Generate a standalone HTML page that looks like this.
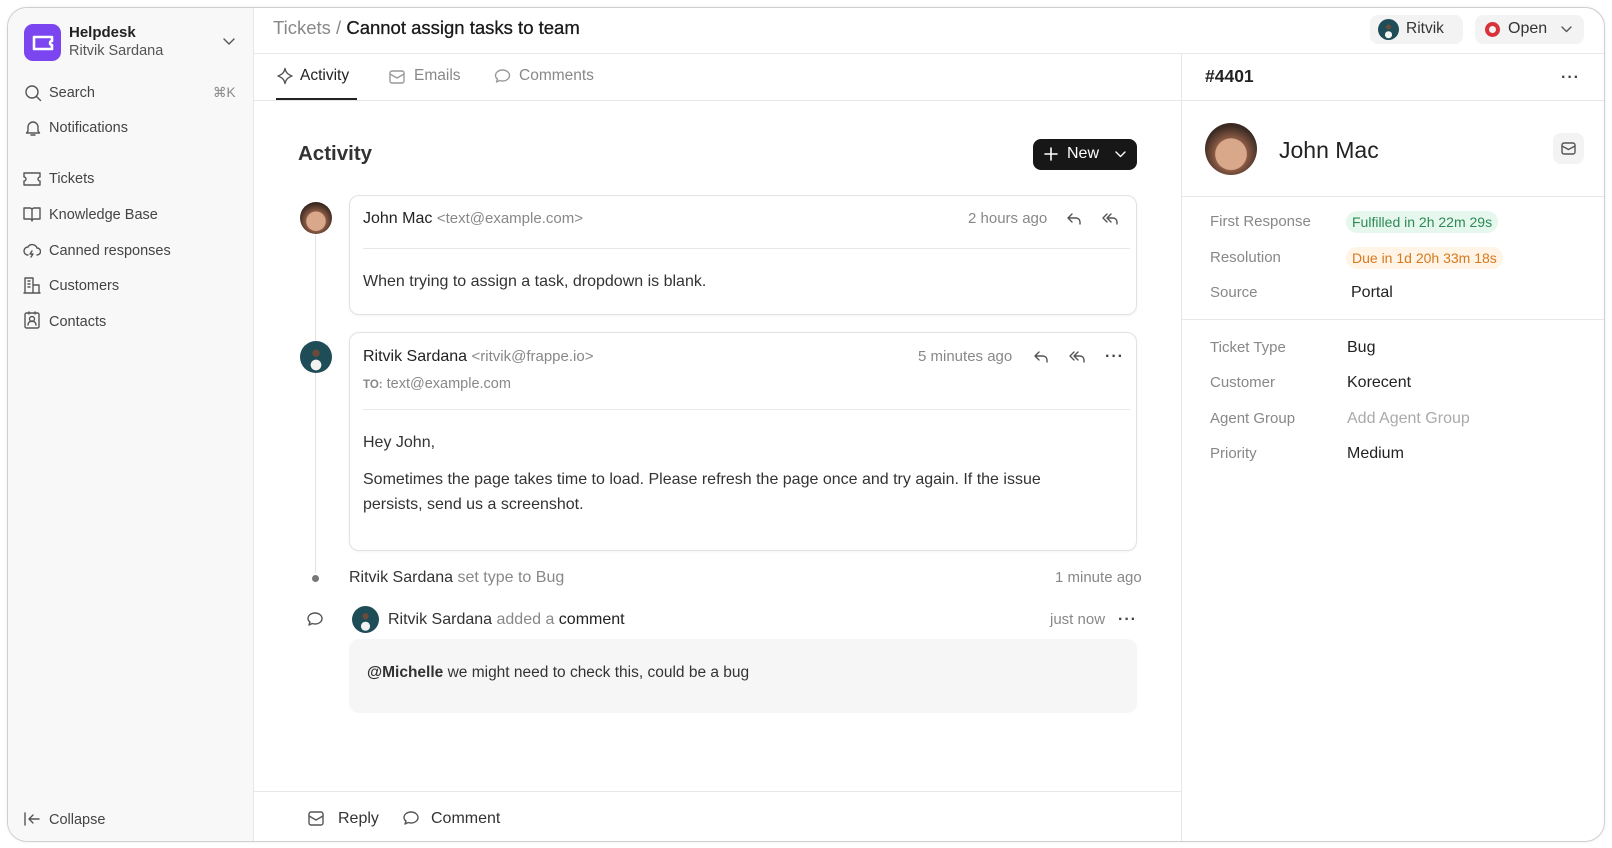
<!DOCTYPE html>
<html><head><meta charset="utf-8">
<style>
*{box-sizing:border-box;margin:0;padding:0}
html,body{width:1612px;height:848px;overflow:hidden;background:#fff;font-family:"Liberation Sans",sans-serif;color:#333}
.frame{position:absolute;left:7px;top:7px;width:1598px;height:835px;border:1.5px solid #cfcfcf;border-radius:20px;overflow:hidden;background:#fff;box-shadow:0 0 3px rgba(0,0,0,.08)}
.a{position:absolute;white-space:nowrap;line-height:20px}
svg{position:absolute;fill:none;stroke:#555;stroke-width:1.4;stroke-linecap:round;stroke-linejoin:round}
.side{position:absolute;left:0;top:0;width:246px;height:100%;background:#f8f8f8;border-right:1px solid #e6e6e6}
.nav{font-size:14.5px;color:#444}
.hl{position:absolute;height:1px;background:#e8e8e8}
.card{position:absolute;border:1px solid #e2e2e2;border-radius:10px;box-shadow:0 1px 2px rgba(0,0,0,.05)}
.av{position:absolute;border-radius:50%;overflow:hidden}
.john{background:radial-gradient(circle at 50% 60%,#d9a88a 0 38%,#8a5a44 40%,#3a2a22 70%),#6b4a3a}
.rit{background:radial-gradient(circle at 50% 75%,#f2f2f2 0 18%,transparent 19%),radial-gradient(circle at 50% 38%,#6a4a3a 0 14%,transparent 15%),#1f4d57}
</style></head><body>
<div class="frame">
<div class="side">
  <div style="position:absolute;left:16px;top:16px;width:37px;height:37px;border-radius:9px;background:#7b45ef"></div>
  <svg style="left:24px;top:26px;stroke:#fff;stroke-width:2.6" width="22" height="18" viewBox="0 0 22 18"><path d="M2 3h18v4a2 2 0 0 0 0 4v4H2z"/></svg>
  <div class="a" style="left:61px;top:15px;font-size:15px;font-weight:bold;color:#222">Helpdesk</div>
  <div class="a" style="left:61px;top:33px;font-size:14.5px;color:#555">Ritvik Sardana</div>
  <svg style="left:215px;top:30px" width="12" height="8" viewBox="0 0 12 8"><path d="M1 1l5 5 5-5"/></svg>
  <svg style="left:16px;top:76px" width="18" height="18" viewBox="0 0 18 18"><circle cx="8" cy="8" r="6"/><path d="M12.5 12.5l4 4"/></svg>
  <div class="a nav" style="left:41px;top:75px">Search</div>
  <div class="a" style="left:205px;top:75px;font-size:13.5px;color:#888">⌘K</div>
  <svg style="left:16px;top:111px" width="18" height="18" viewBox="0 0 18 18"><path d="M4 12V8a5 5 0 0 1 10 0v4l1.5 2h-13zM7 16h4"/></svg>
  <div class="a nav" style="left:41px;top:110px">Notifications</div>
  <svg style="left:15px;top:163px" width="18" height="16" viewBox="0 0 18 16"><path d="M1 2h16v4a2 2 0 0 0 0 4v4H1v-4a2 2 0 0 0 0-4z"/></svg>
  <div class="a nav" style="left:41px;top:161px">Tickets</div>
  <svg style="left:15px;top:198px" width="18" height="16" viewBox="0 0 18 16"><path d="M1 2h6a2 2 0 0 1 2 2v11a2 2 0 0 0-2-2H1zM17 2h-6a2 2 0 0 0-2 2v11a2 2 0 0 1 2-2h6z"/></svg>
  <div class="a nav" style="left:41px;top:197px">Knowledge Base</div>
  <svg style="left:15px;top:234px" width="18" height="18" viewBox="0 0 18 18"><path d="M5 13a4 4 0 0 1 0-8 5 5 0 0 1 9 1 3.5 3.5 0 0 1 0 7M9 9l-2 3h3l-2 3"/></svg>
  <div class="a nav" style="left:41px;top:233px">Canned responses</div>
  <svg style="left:15px;top:268px" width="18" height="18" viewBox="0 0 18 18"><path d="M2 17V2h8v15M10 9h6v8M1 17h16M5 5h2M5 8h2M5 11h2"/></svg>
  <div class="a nav" style="left:41px;top:268px">Customers</div>
  <svg style="left:15px;top:303px" width="18" height="18" viewBox="0 0 18 18"><rect x="2" y="2" width="14" height="15" rx="1.5"/><circle cx="9" cy="8" r="2.5"/><path d="M5 14a4 4 0 0 1 8 0M6 1v2M12 1v2"/></svg>
  <div class="a nav" style="left:41px;top:304px">Contacts</div>
  <svg style="left:15px;top:803px" width="18" height="16" viewBox="0 0 18 16"><path d="M2 2v12M16 8H6M10 4L6 8l4 4"/></svg>
  <div class="a nav" style="left:41px;top:802px">Collapse</div>
</div>

<!-- header -->
<div class="a" style="left:265px;top:9px;font-size:18.5px;line-height:22px"><span style="color:#888">Tickets / </span><span style="color:#1a1a1a;-webkit-text-stroke:0.3px #1a1a1a">Cannot assign tasks to team</span></div>
<div style="position:absolute;left:1362px;top:7px;width:93px;height:29px;border-radius:8px;background:#f3f3f3"></div>
<div class="av rit" style="left:1370px;top:11px;width:21px;height:21px"></div>
<div class="a" style="left:1398px;top:11px;font-size:15.5px;color:#333">Ritvik</div>
<div style="position:absolute;left:1467px;top:7px;width:109px;height:29px;border-radius:8px;background:#f3f3f3"></div>
<div style="position:absolute;left:1477px;top:14px;width:15px;height:15px;border-radius:50%;border:4px solid #d9333a"></div>
<div class="a" style="left:1500px;top:11px;font-size:16px;color:#333">Open</div>
<svg style="left:1553px;top:18px" width="11" height="7" viewBox="0 0 11 7"><path d="M1 1l4.5 4.5L10 1"/></svg>
<div class="hl" style="left:246px;top:45px;width:1352px"></div>

<!-- tabs -->
<svg style="left:268px;top:59px" width="18" height="18" viewBox="0 0 18 18"><path d="M9 1.5c.8 4 2.5 5.7 7 7.5-4.5 1.8-6.2 3.5-7 7.5-.8-4-2.5-5.7-7-7.5 4.5-1.8 6.2-3.5 7-7.5z"/></svg>
<div class="a" style="left:292px;top:58px;font-size:15.5px;color:#222">Activity</div>
<div style="position:absolute;left:268px;top:90px;width:81px;height:2px;background:#222"></div>
<svg style="left:381px;top:62px;stroke:#999" width="16" height="14" viewBox="0 0 16 14"><rect x="1" y="1" width="14" height="12" rx="2"/><path d="M1 4l7 4 7-4"/></svg>
<div class="a" style="left:406px;top:58px;font-size:15.5px;color:#888">Emails</div>
<svg style="left:486px;top:60px;stroke:#999" width="17" height="17" viewBox="0 0 17 17"><path d="M8.5 2C12.5 2 15.5 4.5 15.5 7.5S12.5 13 8.5 13c-1 0-2-.2-2.8-.5L2.5 14l1-3C2 10 1.5 8.8 1.5 7.5 1.5 4.5 4.5 2 8.5 2z"/></svg>
<div class="a" style="left:511px;top:58px;font-size:15.5px;color:#888">Comments</div>
<div class="hl" style="left:246px;top:92px;width:1352px"></div>
<div style="position:absolute;left:1173px;top:45px;width:1px;height:790px;background:#e6e6e6"></div>

<!-- activity -->
<div class="a" style="left:290px;top:134px;font-size:20.5px;line-height:24px;font-weight:bold;color:#333">Activity</div>
<div style="position:absolute;left:1025px;top:131px;width:104px;height:31px;border-radius:8px;background:#171717"></div>
<svg style="left:1036px;top:139px;stroke:#fff;stroke-width:1.6" width="14" height="14" viewBox="0 0 14 14"><path d="M7 1v12M1 7h12"/></svg>
<div class="a" style="left:1059px;top:136px;font-size:16px;color:#fff">New</div>
<svg style="left:1107px;top:143px;stroke:#fff" width="11" height="7" viewBox="0 0 11 7"><path d="M1 1l4.5 4.5L10 1"/></svg>

<div style="position:absolute;left:307px;top:225px;width:1px;height:340px;background:#e3e3e3"></div>

<div class="card" style="left:341px;top:187px;width:788px;height:120px"></div>
<div class="av john" style="left:292px;top:194px;width:32px;height:32px"></div>
<div class="a" style="left:355px;top:201px;font-size:16px"><span style="color:#222">John Mac</span> <span style="color:#888;font-size:15px">&lt;text@example.com&gt;</span></div>
<div class="a" style="left:960px;top:201px;font-size:15px;color:#888">2 hours ago</div>
<svg style="left:1058px;top:204px" width="16" height="14" viewBox="0 0 16 14"><path d="M6 2L2 6l4 4M2 6h8a4 4 0 0 1 4 4v2"/></svg>
<svg style="left:1093px;top:204px" width="18" height="14" viewBox="0 0 18 14"><path d="M6 2L2 6l4 4M10 2L6 6l4 4M6 6h6a4 4 0 0 1 4 4v2"/></svg>
<div class="hl" style="left:355px;top:240px;width:767px"></div>
<div class="a" style="left:355px;top:264px;font-size:16px;color:#333">When trying to assign a task, dropdown is blank.</div>

<div class="card" style="left:341px;top:324px;width:788px;height:219px"></div>
<div class="av rit" style="left:292px;top:333px;width:32px;height:32px"></div>
<div class="a" style="left:355px;top:339px;font-size:16px"><span style="color:#222">Ritvik Sardana</span> <span style="color:#888;font-size:15px">&lt;ritvik@frappe.io&gt;</span></div>
<div class="a" style="left:910px;top:339px;font-size:15px;color:#888">5 minutes ago</div>
<svg style="left:1025px;top:342px" width="16" height="14" viewBox="0 0 16 14"><path d="M6 2L2 6l4 4M2 6h8a4 4 0 0 1 4 4v2"/></svg>
<svg style="left:1060px;top:342px" width="18" height="14" viewBox="0 0 18 14"><path d="M6 2L2 6l4 4M10 2L6 6l4 4M6 6h6a4 4 0 0 1 4 4v2"/></svg>
<div class="a" style="left:1097px;top:339px;font-size:16px;color:#444;font-weight:bold;letter-spacing:1px">···</div>
<div class="a" style="left:355px;top:366px;font-size:14.5px;color:#888"><span style="font-size:11.5px;font-weight:bold">TO:</span> text@example.com</div>
<div class="hl" style="left:355px;top:401px;width:767px"></div>
<div class="a" style="left:355px;top:425px;font-size:16px;color:#333">Hey John,</div>
<div style="position:absolute;left:355px;top:459px;width:720px;font-size:16px;line-height:25px;color:#333">Sometimes the page takes time to load. Please refresh the page once and try again. If the issue persists, send us a screenshot.</div>

<div style="position:absolute;left:304px;top:567px;width:7px;height:7px;border-radius:50%;background:#777"></div>
<div class="a" style="left:341px;top:560px;font-size:16px"><span style="color:#333">Ritvik Sardana</span> <span style="color:#888">set type to Bug</span></div>
<div class="a" style="left:1047px;top:560px;font-size:15px;color:#888">1 minute ago</div>

<svg style="left:298px;top:603px" width="18" height="17" viewBox="0 0 18 17"><path d="M9 2c4 0 7 2.5 7 5.5S13 13 9 13c-1 0-2-.2-2.8-.5L3 14l1-3C2.5 10 2 8.8 2 7.5 2 4.5 5 2 9 2z"/></svg>
<div class="av rit" style="left:344px;top:598px;width:27px;height:27px"></div>
<div class="a" style="left:380px;top:602px;font-size:16px"><span style="color:#333">Ritvik Sardana</span> <span style="color:#888">added a</span> <span style="color:#222">comment</span></div>
<div class="a" style="left:1042px;top:602px;font-size:15px;color:#888">just now</div>
<div class="a" style="left:1110px;top:602px;font-size:16px;color:#444;font-weight:bold;letter-spacing:1px">···</div>
<div style="position:absolute;left:341px;top:631px;width:788px;height:74px;border-radius:10px;background:#f6f6f6"></div>
<div class="a" style="left:359px;top:655px;font-size:15.5px;color:#333"><b>@Michelle</b> we might need to check this, could be a bug</div>

<div class="hl" style="left:246px;top:783px;width:927px"></div>
<svg style="left:300px;top:803px" width="16" height="15" viewBox="0 0 16 15"><rect x="1" y="1" width="14" height="13" rx="2"/><path d="M1 5l7 4 7-4"/></svg>
<div class="a" style="left:330px;top:801px;font-size:16px;color:#333">Reply</div>
<svg style="left:394px;top:802px" width="18" height="17" viewBox="0 0 18 17"><path d="M9 2c4 0 7 2.5 7 5.5S13 13 9 13c-1 0-2-.2-2.8-.5L3 14l1-3C2.5 10 2 8.8 2 7.5 2 4.5 5 2 9 2z"/></svg>
<div class="a" style="left:423px;top:801px;font-size:16px;color:#333">Comment</div>

<!-- right panel -->
<div class="a" style="left:1197px;top:57px;font-size:17.5px;line-height:22px;font-weight:bold;color:#222">#4401</div>
<div class="a" style="left:1553px;top:60px;font-size:16px;color:#444;font-weight:bold;letter-spacing:1px">···</div>
<div class="av john" style="left:1197px;top:115px;width:52px;height:52px"></div>
<div class="a" style="left:1271px;top:128px;font-size:23px;line-height:28px;color:#222">John Mac</div>
<div style="position:absolute;left:1545px;top:125px;width:31px;height:31px;border-radius:8px;background:#f3f3f3"></div>
<svg style="left:1553px;top:134px" width="15" height="13" viewBox="0 0 15 13"><rect x="1" y="1" width="13" height="11" rx="2"/><path d="M1 4l6.5 3.5L14 4"/></svg>
<div class="hl" style="left:1174px;top:188px;width:424px"></div>
<div class="a" style="left:1202px;top:204px;font-size:15px;color:#888">First Response</div>
<div class="a" style="left:1338px;top:203px;padding:0 6px;height:22px;line-height:22px;border-radius:11px;background:#e6f7ee;font-size:14px;color:#2e8a55">Fulfilled in 2h 22m 29s</div>
<div class="a" style="left:1202px;top:240px;font-size:15px;color:#888">Resolution</div>
<div class="a" style="left:1338px;top:239px;padding:0 6px;height:22px;line-height:22px;border-radius:11px;background:#fff4e6;font-size:14px;color:#d67a1e">Due in 1d 20h 33m 18s</div>
<div class="a" style="left:1202px;top:275px;font-size:15px;color:#888">Source</div>
<div class="a" style="left:1343px;top:275px;font-size:16px;color:#222">Portal</div>
<div class="hl" style="left:1174px;top:311px;width:424px"></div>
<div class="a" style="left:1202px;top:330px;font-size:15px;color:#888">Ticket Type</div>
<div class="a" style="left:1339px;top:330px;font-size:16px;color:#222">Bug</div>
<div class="a" style="left:1202px;top:365px;font-size:15px;color:#888">Customer</div>
<div class="a" style="left:1339px;top:365px;font-size:16px;color:#222">Korecent</div>
<div class="a" style="left:1202px;top:401px;font-size:15px;color:#888">Agent Group</div>
<div class="a" style="left:1339px;top:401px;font-size:16px;color:#aaa">Add Agent Group</div>
<div class="a" style="left:1202px;top:436px;font-size:15px;color:#888">Priority</div>
<div class="a" style="left:1339px;top:436px;font-size:16px;color:#222">Medium</div>
</div>
</body></html>
